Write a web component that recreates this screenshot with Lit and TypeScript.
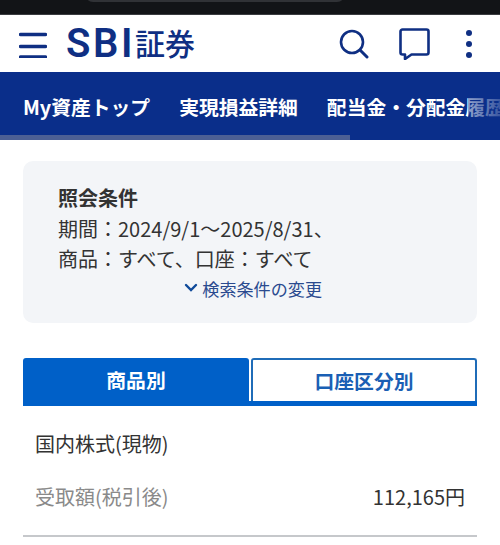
import { LitElement, html, css } from "lit";
import { customElement } from "lit/decorators.js";

@customElement("app-root")
export class AppRoot extends LitElement {
  static styles = css`
    :host { display: block; width: 500px; height: 545px; overflow: hidden; background: #fff; color: #333;
      font-family: "Noto Sans CJK JP", sans-serif; }
    .status { height: 15px; background: #121417; border-bottom: 1px solid #3a3c40; box-sizing: border-box; position: relative; overflow: hidden; }
    .pill { position: absolute; left: 85px; top: -6px; width: 260px; height: 8px; background: #303236; border-radius: 0 0 8px 8px; }
    .head { height: 57px; display: flex; align-items: center; padding: 0 19px; box-sizing: border-box; }
    .menu { width: 28px; height: 28px; display: block; margin-right: 19px; }
    .logo { display: flex; align-items: center; color: #0f2f83; }
    .sbi { font: 600 40px/1 Roboto, sans-serif; letter-spacing: 2.600px; }
    .sho { font: 500 30px/1 "Noto Sans CJK JP", sans-serif; margin-bottom: 3px; }
    .icons { margin-left: auto; display: flex; align-items: center; margin-right: 8px; }
    .ic { display: block; }
    .search { margin-right: 30px; }
    .chat { margin-right: 35px; }
    .nav { height: 68px; background: #0a2e8a; position: relative; display: flex; padding-left: 23px; gap: 29px; color: #fff; overflow: hidden;
      font: 700 19.8px/1 "Noto Sans CJK JP", sans-serif; align-items: flex-start; white-space: nowrap; }
    .nav span { margin-top: 25px; }
    .fade { position: absolute; left: 468px; top: 0; bottom: 5px; width: 32px; background: linear-gradient(to right, rgba(10,46,138,.45), rgba(10,46,138,.8)); }
    .bar { position: absolute; left: 0; bottom: 0; width: 350px; height: 5px; background: #4c5f94; }
    main { padding: 21px 23px 0; }
    .card { height: 162px; background: #f3f5f8; border-radius: 10px; padding: 22px 35px 0; box-sizing: border-box; font-size: 20px; line-height: 30.5px; color: #333; }
    .card b { font-weight: 700; display: block; }
    .card div { white-space: nowrap; }
    .chg { display: flex; justify-content: flex-end; align-items: center; width: 264px; color: #2a4a8f; font-size: 17.1px; line-height: 27px; gap: 4px; }
    .tabs { margin-top: 35px; height: 48px; display: flex; border-bottom: 5px solid #0060c8; box-sizing: border-box; font: 700 19.8px/1 "Noto Sans CJK JP", sans-serif; }
    .tab { display: flex; align-items: center; justify-content: center; box-sizing: border-box; border-radius: 3px 3px 0 0; }
    .on { width: 226px; background: #0060c8; color: #fff; }
    .off { margin-left: 2px; flex: 1; border: 2px solid #1f6cb8; border-bottom: 0; color: #1a5fb4; }
    .name { font: 400 20px/26px "Noto Sans CJK JP", sans-serif; padding: 25px 12px 0; color: #333; }
    .row { display: flex; justify-content: space-between; padding: 27px 12px 0; font: 400 20px/26px "Noto Sans CJK JP", sans-serif; }
    .row .l { color: #8a8a8a; }
    .rule { margin-top: 25px; height: 2px; background: #c6c8cb; }
  `;

  render() {
    return html`
      <div class="status"><div class="pill"></div></div>
      <div class="head">
        <svg class="menu" viewBox="0 0 28 28"><path d="M1.500 4.500h25M1.500 16.500h25M1.500 27h25" stroke="#0f2f83" stroke-width="3.400" stroke-linecap="round"/></svg>
        <div class="logo"><span class="sbi">SBI</span><span class="sho">証券</span></div>
        <div class="icons">
          <svg class="ic search" width="30" height="30" viewBox="0 0 30 30"><circle cx="13" cy="13" r="11" fill="none" stroke="#0f2f83" stroke-width="2.600"/><path d="M21.500 21.500l6.500 6.500" stroke="#0f2f83" stroke-width="3" stroke-linecap="round"/></svg>
          <svg class="ic chat" width="31" height="32" viewBox="0 0 31 32"><path d="M3.500 1.500h24a2 2 0 0 1 2 2v21a2 2 0 0 1-2 2H12.500L6 31v-4.500H3.500a2 2 0 0 1-2-2v-21a2 2 0 0 1 2-2z" fill="none" stroke="#0f2f83" stroke-width="2.600" stroke-linejoin="round"/></svg>
          <svg class="ic" width="8" height="28" viewBox="0 0 8 28"><circle cx="4" cy="3" r="3" fill="#0f2f83"/><circle cx="4" cy="14" r="3" fill="#0f2f83"/><circle cx="4" cy="25" r="3" fill="#0f2f83"/></svg>
        </div>
      </div>
      <div class="nav">
        <span>My資産トップ</span><span>実現損益詳細</span><span>配当金・分配金履歴</span>
        <div class="fade"></div><div class="bar"></div>
      </div>
      <main>
        <div class="card">
          <b>照会条件</b>
          <div>期間：2024/9/1〜2025/8/31、</div>
          <div>商品：すべて、口座：すべて</div>
          <div class="chg"><svg width="14" height="10" viewBox="0 0 14 10"><path d="M2 2l5 5 5-5" fill="none" stroke="#0f4a9a" stroke-width="2.400" stroke-linecap="round"/></svg><span>検索条件の変更</span></div>
        </div>
        <div class="tabs">
          <div class="tab on">商品別</div>
          <div class="tab off">口座区分別</div>
        </div>
        <div class="name">国内株式(現物)</div>
        <div class="row"><span class="l">受取額(税引後)</span><span>112,165円</span></div>
        <div class="rule"></div>
      </main>
    `;
  }
}
